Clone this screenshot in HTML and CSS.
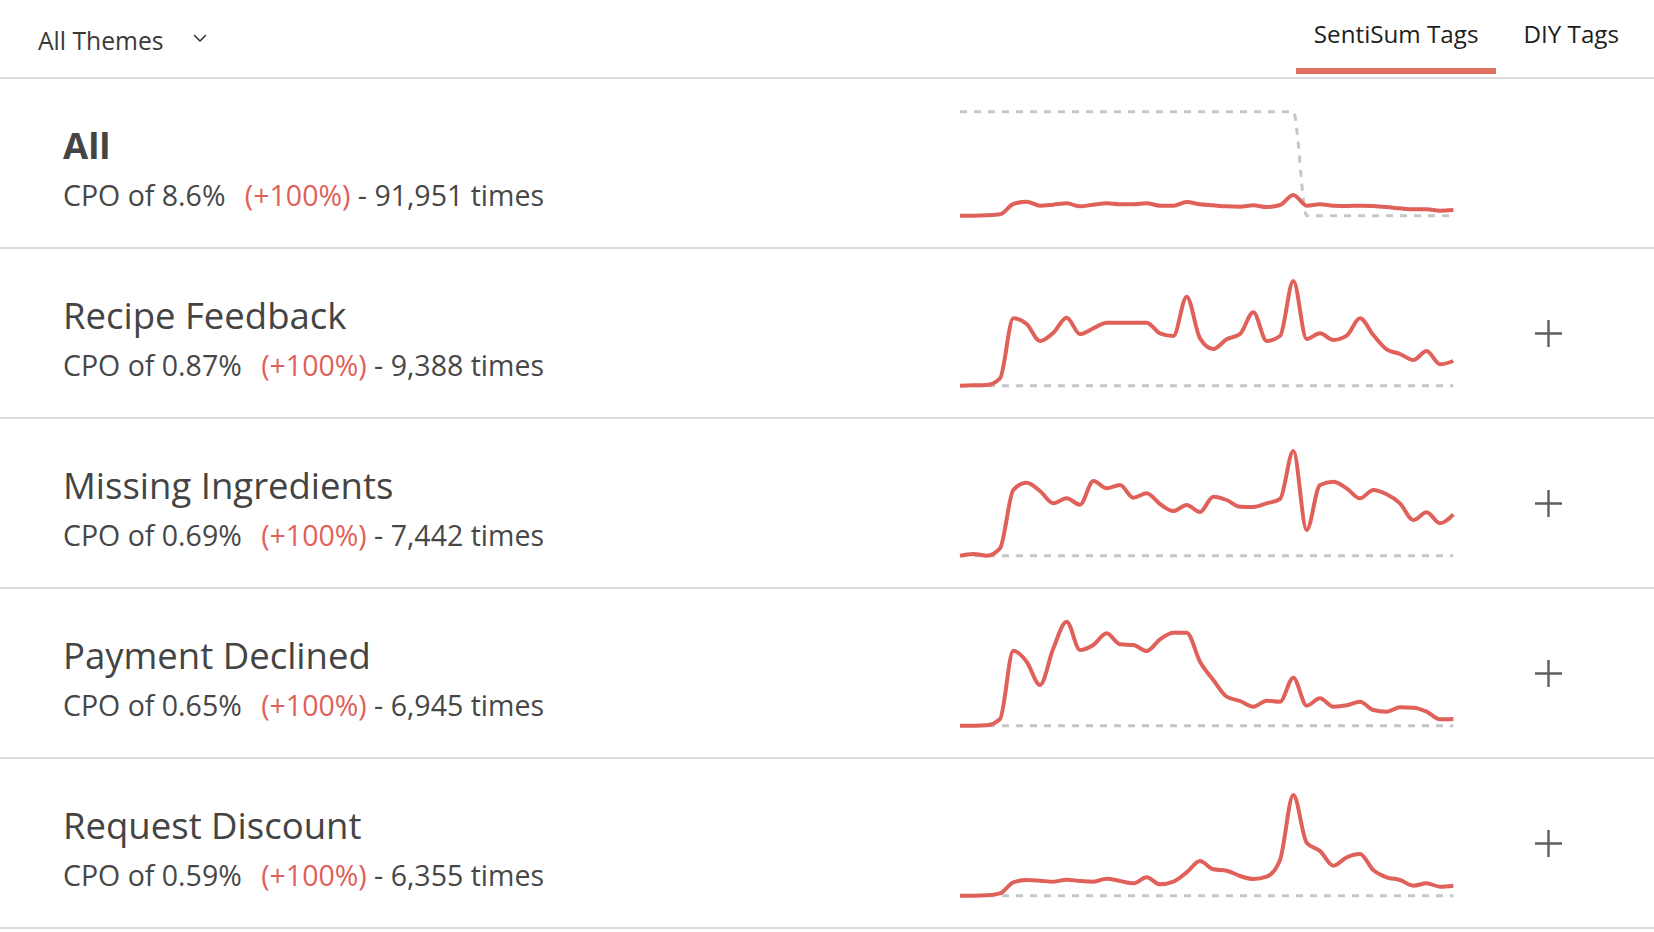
FILE: index.html
```html
<!DOCTYPE html>
<html lang="en">
<head>
<meta charset="utf-8">
<title>Tags</title>
<link rel="stylesheet" href="styles.css">
</head>
<body>
<div class="app">
  <header class="topbar">
    <div class="theme-select">
      <span>All Themes</span>
      <svg class="chev" viewBox="0 0 14 9" width="14" height="9"><path d="M1.5 1.5l5.5 5.5 5.5-5.5"/></svg>
    </div>
    <nav class="tabs">
      <div class="tab active">SentiSum Tags</div>
      <div class="tab">DIY Tags</div>
    </nav>
  </header>

  <ul class="rows">
    <li class="row">
      <div class="info">
        <div class="title bold">All</div>
        <div class="sub">CPO of 8.6% <span class="chg">(+100%)</span> - 91,951 times</div>
      </div>
      <svg class="spark" viewBox="0 0 520 157"
        data-prev="65,65,65,65,65,65,65,65,65,65,65,65,65,65,65,65,65,65,65,65,65,65,65,65,65,65,377,377,377,377,377,377,377,377,377,377,377,377"
        data-curr="377,377,376,373,342,335,347,344,340,349,344,340,343,343,340,347,347,336,343,346,349,350,346,351,345,315,347,343,347,348,347,348,351,355,358,358,362,360">
        <path class="prev"/><path class="curr"/>
      </svg>
      <div class="act"></div>
    </li>

    <li class="row">
      <div class="info">
        <div class="title">Recipe Feedback</div>
        <div class="sub">CPO of 0.87% <span class="chg">(+100%)</span> - 9,388 times</div>
      </div>
      <svg class="spark" viewBox="0 0 520 157"
        data-prev="377,377,377,377,377,377,377,377,377,377,377,377,377,377,377,377,377,377,377,377,377,377,377,377,377,377,377,377,377,377,377,377,377,377,377,377,377,377"
        data-curr="377,376,375,355,175,192,243,218,173,222,205,188,188,188,188,220,228,110,235,267,238,222,157,243,228,63,237,220,240,227,175,225,268,282,300,273,313,303">
        <path class="prev"/><path class="curr"/>
      </svg>
      <div class="act"><svg class="plus" viewBox="0 0 27 27"><path d="M13.5 0v27M0 13.5h27"/></svg></div>
    </li>

    <li class="row">
      <div class="info">
        <div class="title">Missing Ingredients</div>
        <div class="sub">CPO of 0.69% <span class="chg">(+100%)</span> - 7,442 times</div>
      </div>
      <svg class="spark" viewBox="0 0 520 157"
        data-prev="377,377,377,377,377,377,377,377,377,377,377,377,377,377,377,377,377,377,377,377,377,377,377,377,377,377,377,377,377,377,377,377,377,377,377,377,377,377"
        data-curr="377,372,377,355,180,158,183,220,205,224,153,175,165,203,190,222,243,225,246,200,210,230,231,220,207,63,300,165,155,175,205,180,193,220,270,247,280,253">
        <path class="prev"/><path class="curr"/>
      </svg>
      <div class="act"><svg class="plus" viewBox="0 0 27 27"><path d="M13.5 0v27M0 13.5h27"/></svg></div>
    </li>

    <li class="row">
      <div class="info">
        <div class="title">Payment Declined</div>
        <div class="sub">CPO of 0.65% <span class="chg">(+100%)</span> - 6,945 times</div>
      </div>
      <svg class="spark" viewBox="0 0 520 157"
        data-prev="377,377,377,377,377,377,377,377,377,377,377,377,377,377,377,377,377,377,377,377,377,377,377,377,377,377,377,377,377,377,377,377,377,377,377,377,377,377"
        data-curr="377,377,376,357,152,185,255,145,65,150,135,100,133,135,153,118,98,98,185,240,290,303,320,302,305,233,317,295,320,316,305,330,335,322,323,335,358,357">
        <path class="prev"/><path class="curr"/>
      </svg>
      <div class="act"><svg class="plus" viewBox="0 0 27 27"><path d="M13.5 0v27M0 13.5h27"/></svg></div>
    </li>

    <li class="row">
      <div class="info">
        <div class="title">Request Discount</div>
        <div class="sub">CPO of 0.59% <span class="chg">(+100%)</span> - 6,355 times</div>
      </div>
      <svg class="spark" viewBox="0 0 520 157"
        data-prev="377,377,377,377,377,377,377,377,377,377,377,377,377,377,377,377,377,377,377,377,377,377,377,377,377,377,377,377,377,377,377,377,377,377,377,377,377,377"
        data-curr="377,377,376,370,337,330,332,335,329,333,335,326,333,340,322,343,335,307,273,298,302,318,327,320,270,75,218,243,287,262,252,300,322,330,347,340,350,347">
        <path class="prev"/><path class="curr"/>
      </svg>
      <div class="act"><svg class="plus" viewBox="0 0 27 27"><path d="M13.5 0v27M0 13.5h27"/></svg></div>
    </li>
  </ul>
</div>
<script src="app.js"></script>
</body>
</html>
```

FILE: styles.css
```css
* {
  box-sizing: border-box;
  margin: 0;
  padding: 0;
}

html, body {
  background: #ffffff;
}

body {
  font-family: "Open Sans", "Noto Sans", sans-serif;
  color: #444444;
}

.topbar {
  display: flex;
  justify-content: space-between;
  height: 79px;
  border-bottom: 2px solid #dcdcdc;
}

.theme-select {
  display: flex;
  align-items: flex-start;
  padding: 26px 0 0 38px;
  font-size: 24.7px;
  line-height: 30px;
  color: #3a3a3a;
}

.chev {
  margin: 8px 0 0 29px;
  fill: none;
  stroke: #333333;
  stroke-width: 1.6;
  stroke-linecap: round;
  stroke-linejoin: round;
}

.tabs {
  display: flex;
  gap: 9px;
  padding-right: 17px;
}

.tab {
  height: 74px;
  padding: 20px 18px 0;
  font-size: 24.2px;
  line-height: 28px;
  color: #1e1e1e;
  border-bottom: 6px solid transparent;
}

.tab.active {
  border-bottom-color: #e07060;
}

.rows {
  list-style: none;
}

.row {
  display: grid;
  grid-template-columns: 940px 520px 1fr;
  height: 170px;
  border-bottom: 2px solid #dcdcdc;
}

.info {
  padding: 44px 0 0 63px;
}

.title {
  font-size: 36.5px;
  line-height: 44px;
  color: #444444;
  margin-bottom: 11px;
}

.title.bold {
  font-weight: 700;
}

.sub {
  font-size: 28.5px;
  line-height: 34px;
  color: #474747;
}

.chg {
  color: #e0605a;
  margin-left: 12px;
}

.spark {
  display: block;
  width: 520px;
  height: 157px;
  margin-top: 11px;
  overflow: visible;
}

.spark path {
  fill: none;
  stroke-linecap: butt;
  stroke-linejoin: round;
}

.spark .prev {
  stroke: #c6c6c6;
  stroke-width: 3;
  stroke-dasharray: 7 7;
}

.spark .curr {
  stroke: #e0605a;
  stroke-width: 4;
}

.act {
  display: flex;
  align-items: center;
  padding-left: 75px;
}

.plus {
  width: 27px;
  height: 27px;
  fill: none;
  stroke: #5e5e5e;
  stroke-width: 2.4;
}
```

FILE: app.js
```js
// Draws each sparkline from its data (values are in 1/3 px units from the chart top).
function monotonePath(pts) {
  var n = pts.length, h = [], s = [], t = new Array(n), i;
  for (i = 0; i < n - 1; i++) {
    h[i] = pts[i + 1][0] - pts[i][0];
    s[i] = (pts[i + 1][1] - pts[i][1]) / h[i];
  }
  for (i = 1; i < n - 1; i++) {
    var s0 = s[i - 1], s1 = s[i];
    var p = (s0 * h[i] + s1 * h[i - 1]) / (h[i - 1] + h[i]);
    t[i] = (Math.sign(s0) + Math.sign(s1)) * Math.min(Math.abs(s0), Math.abs(s1), 0.5 * Math.abs(p)) || 0;
  }
  t[0] = (3 * s[0] - t[1]) / 2;
  t[n - 1] = (3 * s[n - 2] - t[n - 2]) / 2;
  var d = 'M' + pts[0][0].toFixed(2) + ',' + pts[0][1].toFixed(2);
  for (i = 0; i < n - 1; i++) {
    var x0 = pts[i][0], y0 = pts[i][1], x1 = pts[i + 1][0], y1 = pts[i + 1][1], dx = h[i] / 3;
    d += 'C' + (x0 + dx).toFixed(2) + ',' + (y0 + t[i] * dx).toFixed(2) + ' ' +
         (x1 - dx).toFixed(2) + ',' + (y1 - t[i + 1] * dx).toFixed(2) + ' ' +
         x1.toFixed(2) + ',' + y1.toFixed(2);
  }
  return d;
}

document.querySelectorAll('.spark').forEach(function (svg) {
  ['prev', 'curr'].forEach(function (key) {
    var ys = svg.dataset[key].split(',').map(Number);
    var pts = ys.map(function (v, i) { return [(60 + 40 * i) / 3, v / 3]; });
    svg.querySelector('.' + key).setAttribute('d', monotonePath(pts));
  });
});
```
